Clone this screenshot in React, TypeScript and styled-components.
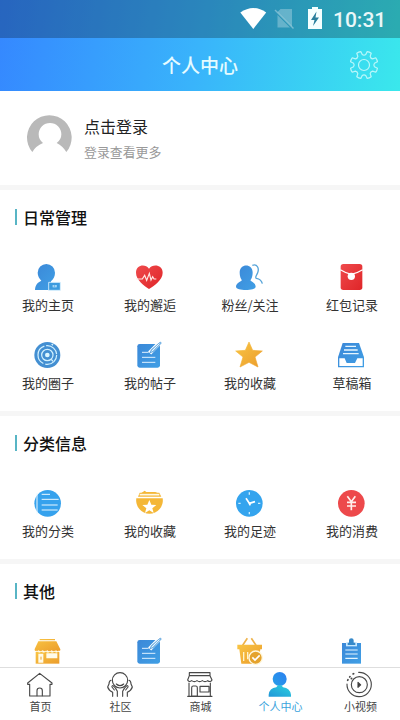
import React from 'react';
import styled, { createGlobalStyle } from 'styled-components';

const GlobalStyle = createGlobalStyle`
  * { box-sizing: border-box; }
  body { margin: 0; background: #fff; overflow: hidden; }
`;

const Screen = styled.div`
  width: 400px;
  height: 720px;
  display: flex;
  flex-direction: column;
  overflow: hidden;
  background: #fff;
  font-family: 'Noto Sans CJK SC', 'Noto Sans', sans-serif;
  color: #333;
`;

const Top = styled.header`
  flex: none;
  height: 91px;
  background: linear-gradient(100deg, #3587ff 0%, #39b4fb 50%, #3ae8ec 100%);
`;

const StatusBar = styled.div`
  height: 38px;
  padding-right: 13px;
  background: rgba(0, 0, 0, 0.25);
  display: flex;
  align-items: center;
  justify-content: flex-end;
`;

const StatusIcons = styled.svg`
  width: 88px;
  height: 38px;
  display: block;
`;

const Clock = styled.time`
  width: 54px;
  margin-left: 6px;
  font: 500 21px/38px Roboto, sans-serif;
  color: #e9f7f8;
  white-space: nowrap;
  padding-top: 1px;
`;

const TitleBar = styled.div`
  height: 53px;
  display: grid;
  grid-template-columns: 72px 1fr 72px;
  align-items: center;
  justify-items: center;
`;

const PageTitle = styled.h1`
  grid-column: 2;
  margin: 0;
  font-size: 19px;
  line-height: 28px;
  font-weight: 500;
  color: #e6fbff;
`;

const GearIcon = styled.svg`
  width: 30px;
  height: 30px;
`;

const Content = styled.main`
  flex: 1;
  min-height: 0;
  overflow: hidden;
`;

const Profile = styled.section`
  height: 94px;
  padding: 24px 0 0 26px;
  display: flex;
  gap: 12px;
`;

const Avatar = styled.svg`
  width: 46px;
  height: 46px;
`;

const LoginText = styled.div`
  margin-top: -1px;
`;

const LoginTitle = styled.div`
  font-size: 16px;
  line-height: 24px;
  color: #222;
`;

const LoginHint = styled.div`
  margin-top: 4px;
  font-size: 12.9px;
  line-height: 20px;
  color: #999;
`;

const Section = styled.section<{ $height: number }>`
  height: ${(p) => p.$height}px;
  border-top: 5px solid #f6f6f6;
  padding-top: 15px;
`;

const SectionTitle = styled.h2`
  margin: 0 0 0 15px;
  height: 24px;
  display: flex;
  align-items: center;
  gap: 6px;
  font-size: 16px;
  line-height: 22px;
  font-weight: 500;
  color: #111;
  padding-bottom: 1px;

  &::before {
    content: '';
    width: 2px;
    height: 16px;
    background: #58b5c5;
  }
`;

const MenuGrid = styled.div`
  margin: 34px 0 0 -4px;
  display: grid;
  grid-template-columns: 102px 102px 98px 106px;
  grid-auto-rows: 78px;
`;

const MenuItem = styled.div`
  display: flex;
  flex-direction: column;
  align-items: center;
`;

const MenuIcon = styled.svg`
  flex: none;
  width: 28px;
  height: 28px;
  overflow: visible;
`;

const MenuLabel = styled.span`
  margin-top: 4px;
  padding-left: 2px;
  font-size: 13px;
  line-height: 20px;
  white-space: nowrap;
`;

const TabBar = styled.nav`
  flex: none;
  height: 53px;
  border-top: 1px solid #dedede;
  background: #fff;
  display: grid;
  grid-template-columns: repeat(5, 1fr);
`;

const Tab = styled.div<{ $active?: boolean }>`
  display: flex;
  flex-direction: column;
  align-items: center;
  padding-top: 3px;
  font-size: 11px;
  line-height: 16px;
  color: ${(p) => (p.$active ? '#3aa3dc' : '#444')};
`;

const TabIcon = styled.svg`
  width: 28px;
  height: 28px;
  fill: none;
  stroke: #484848;
  stroke-width: 3.4;
  stroke-linecap: round;
  stroke-linejoin: round;
`;

const TabLabel = styled.span`
  margin-top: -1px;
  padding-left: 1px;
`;

const Gradients = styled.svg`
  display: block;
  width: 0;
  height: 0;
`;

const note = (
  <>
    <rect x="7" y="9" width="68" height="71" rx="7" fill="url(#blue)" />
    <path d="M21 34H41M21 49H61M21 64H61" stroke="#dff1ff" strokeWidth="3" />
    <path d="M44 36L76 3" stroke="#fff" strokeWidth="13" />
    <path d="M45 35L49 26L76 3L79 6L55 32Z" fill="#8cc4ee" stroke="#4a96d4" strokeWidth="2" />
    <path d="M50 31L73 8" stroke="#fff" strokeWidth="2.5" />
  </>
);

const STAR = 'M42 3L53 28L82 30L60 48L69 78L42 64L15 78L24 48L2 30L31 28Z';

const icons: Record<string, React.ReactNode> = {
  home: (
    <>
      <path d="M6 80C7 65 14 58 25 53C19 46 14 39 14 29A26 26 0 0 1 66 29C66 40 62 48 54 55V81H6Z" fill="url(#blue)" />
      <path d="M47 58H82V82H47Z" fill="#3c9bdf" stroke="#dff3ff" strokeWidth="2.5" />
      <path d="M59 66H71V73H59Z" fill="#b8e4ff" />
      <path d="M62 69H67" stroke="#368ccc" strokeWidth="3" />
    </>
  ),
  heart: (
    <>
      <path d="M42 78C28 68 3 51 3 29C3 5 31 1 42 17C53 1 83 5 83 29C83 51 57 68 42 78Z" fill="url(#red)" />
      <path d="M3 48H22L29 37L35 52L43 31L48 51L53 41L57 48H64" fill="none" stroke="#ffe9e5" strokeWidth="3.5" />
    </>
  ),
  fans: (
    <>
      <path d="M14 29C14 0 53 0 53 29C53 39 50 47 46 52C50 57 62 60 62 71C62 84 3 84 3 71C3 61 16 57 21 52C17 47 14 39 14 29Z" fill="url(#blue)" />
      <path d="M52 7C67 1 73 17 68 29C64 39 59 43 64 46C75 48 80 53 82 62" fill="none" stroke="#57a4d9" strokeWidth="4" />
    </>
  ),
  redpacket: (
    <>
      <rect x="11" y="3" width="65" height="78" rx="8" fill="url(#red)" />
      <path d="M10 20Q28 31 43 34Q59 31 77 20" fill="none" stroke="#fff" strokeWidth="3.5" />
      <circle cx="43" cy="40" r="11" fill="#fff" />
    </>
  ),
  rings: (
    <>
      <circle cx="43" cy="42" r="39" fill="#438fd2" />
      <g fill="none" stroke="#d2f1ff" strokeWidth="3.6">
        <circle cx="43" cy="42" r="28" strokeDasharray="50 6 66 5 45 4" />
        <circle cx="43" cy="42" r="17" />
        <path d="M55 55L60 61M56 9L60 13" strokeWidth="4" />
      </g>
      <circle cx="43" cy="42" r="7" fill="#daf5ff" />
    </>
  ),
  note,
  star: <path d={STAR} fill="url(#gold)" stroke="url(#gold)" strokeWidth="2" strokeLinejoin="round" />,
  drafts: (
    <>
      <path d="M17 6H66L81 49V79H3V49Z" fill="url(#blue)" />
      <path d="M25 16H57M21 27H62M18 38H65" stroke="#e6f6ff" strokeWidth="4" />
      <path d="M7 52H23L29 66H54L61 52H77V75H7Z" fill="#fff" />
    </>
  ),
  list: (
    <>
      <circle cx="44" cy="43" r="40" fill="#36a2ed" />
      <path d="M12 12V76M26 16H51M26 31H77M26 48H74M26 63H74" fill="none" stroke="#eaf8ff" strokeWidth="3" />
    </>
  ),
  favorite: (
    <>
      <path d="M18 13L29 5L34 9H61L69 13Z" fill="#f4b737" />
      <path d="M4 28H83A40 40 0 1 1 4 28Z" fill="#f4b737" />
      <path d="M9 23L14 11H73L79 23Z" fill="#f4b737" />
      <path d="M14 17H73" stroke="#fff8e4" strokeWidth="5" />
      <path d="M43 33L49 47L64 48L52 58L56 72L43 64L30 72L34 58L22 48L37 47Z" fill="#fff" />
    </>
  ),
  clock: (
    <>
      <circle cx="43" cy="43" r="40" fill="#34a4ee" />
      <path d="M43 10V17M43 69V76M10 43H17M69 43H76" stroke="#cceeff" strokeWidth="4" />
      <path d="M33 28L43 43L60 38M41 40L46 49" fill="none" stroke="#fff" strokeWidth="5" strokeLinejoin="round" />
    </>
  ),
  money: (
    <>
      <circle cx="43" cy="43" r="40" fill="#ed494b" />
      <path d="M31 22L43 38L55 22M43 38V64M30 40H57M30 51H57" fill="none" stroke="#fff0ed" strokeWidth="5" />
    </>
  ),
  store: (
    <>
      <path d="M20 6H66V10H20ZM16 13H70L82 37V40Q75 46 69 40Q63 46 56 40Q49 46 43 40Q36 46 29 40Q23 46 17 40Q10 46 5 40V36Z" fill="url(#gold)" />
      <path d="M8 45H79V80H8Z" fill="url(#gold)" />
      <path d="M11 42Q20 49 25 43Q33 49 38 43Q45 49 51 43Q58 49 64 43Q71 49 77 42" fill="none" stroke="#fff3c8" strokeWidth="3" />
      <path d="M16 50H31V77H16ZM40 49H73V64H40Z" fill="#fffbe9" />
      <path d="M24 59V68" stroke="#eda52c" strokeWidth="3" />
    </>
  ),
  basket: (
    <>
      <path d="M23 25L37 4M63 25L49 4" stroke="#eeb34b" strokeWidth="5" />
      <path d="M7 23H81V37H76L70 80H19L13 37H7Z" fill="url(#gold)" />
      <path d="M26 45V72M38 45V67" stroke="#fff3cb" strokeWidth="4" />
      <circle cx="62" cy="62" r="20" fill="#e5a32d" stroke="#fff8df" strokeWidth="4" />
      <path d="M52 61L60 69L74 55" fill="none" stroke="#fff" strokeWidth="5" />
    </>
  ),
  clipboard: (
    <>
      <path d="M15 18H72V80H15Z" fill="url(#blue)" />
      <path d="M27 16H60V28H27Z" fill="#c8e9ff" />
      <path d="M32 17H36V10Q36 4 43 4Q50 4 50 10V17H55V24H32Z" fill="#3689c9" />
      <path d="M25 39H62M25 51H62M25 64H62" stroke="#e4f6ff" strokeWidth="3.5" />
    </>
  ),
};

const sections = [
  {
    title: '日常管理',
    height: 226,
    items: [
      ['home', '我的主页'],
      ['heart', '我的邂逅'],
      ['fans', '粉丝/关注'],
      ['redpacket', '红包记录'],
      ['rings', '我的圈子'],
      ['note', '我的帖子'],
      ['star', '我的收藏'],
      ['drafts', '草稿箱'],
    ],
  },
  {
    title: '分类信息',
    height: 148,
    items: [
      ['list', '我的分类'],
      ['favorite', '我的收藏'],
      ['clock', '我的足迹'],
      ['money', '我的消费'],
    ],
  },
  {
    title: '其他',
    height: 148,
    items: [
      ['store', ''],
      ['note', ''],
      ['basket', ''],
      ['clipboard', ''],
    ],
  },
];

const tabs: { label: string; active?: boolean; icon: React.ReactNode }[] = [
  {
    label: '首页',
    icon: (
      <>
        <path d="M5 36L41 7L78 36V40H72V75H11V40H5Z" />
        <path d="M33 74V59Q33 51 41 51Q49 51 49 59V74" />
      </>
    ),
  },
  {
    label: '社区',
    icon: (
      <>
        <circle cx="42" cy="28" r="23" />
        <path d="M31 39Q42 49 53 39" />
        <path d="M15 28Q9 30 9 39L5 48Q8 58 20 64V76M34 76V61Q29 50 21 44Q17 44 18 48L25 57M69 28Q75 30 75 39L79 48Q76 58 64 64V76M50 76V61Q55 50 63 44Q67 44 66 48L59 57" />
      </>
    ),
  },
  {
    label: '商城',
    icon: (
      <>
        <path d="M10 5H72V14H10ZM10 14L5 27Q9 35 17 29Q25 35 33 29Q41 35 49 29Q57 35 65 29Q74 35 78 27L72 14" />
        <path d="M9 36V76M73 36V76M5 76H78M17 75V50Q17 45 22 45H29Q34 45 34 50V75ZM42 46H69V63H42Z" />
      </>
    ),
  },
  {
    label: '个人中心',
    active: true,
    icon: (
      <>
        <circle cx="41" cy="24" r="21" fill="url(#userHead)" stroke="none" />
        <path d="M8 77V71Q10 52 31 49L36 43H46L51 49Q72 52 75 71V77Z" fill="url(#userBody)" stroke="none" />
      </>
    ),
  },
  {
    label: '小视频',
    icon: (
      <>
        <circle cx="40" cy="41" r="24" />
        <path d="M38 4A36.500 36.500 0 1 1 3 39" />
        <path d="M5 28L6 26M11 18L12 17M21 9L23 8M16 23L17 22" strokeWidth="5" />
        <path d="M36 34V49L44 41.500Z" fill="#333" />
      </>
    ),
  },
];

const gearPath = Array.from({ length: 8 }, (_, i) => {
  const point = (radius: number, degrees: number) => {
    const angle = ((i * 45 + degrees - 67.5) * Math.PI) / 180;
    return `${(15 + radius * Math.cos(angle)).toFixed(2)} ${(15 + radius * Math.sin(angle)).toFixed(2)}`;
  };
  return `${i ? 'L' : 'M'}${point(10.6, -13)}L${point(13.8, -9)}Q${point(14.2, 0)} ${point(13.8, 9)}L${point(10.6, 13)}Q${point(9.2, 22.5)} ${point(10.6, 32)}`;
}).join('') + 'Z';

export default function App() {
  return (
    <Screen>
      <GlobalStyle />
      <Gradients>
        <defs>
          <linearGradient id="blue" x1="0" y1="0" x2="1" y2="1">
            <stop stopColor="#3b88d8" />
            <stop offset="1" stopColor="#409fe5" />
          </linearGradient>
          <linearGradient id="red" x1="0" y1="0" x2="1" y2="1">
            <stop stopColor="#ef4a4c" />
            <stop offset="1" stopColor="#df2528" />
          </linearGradient>
          <linearGradient id="gold" x1="0" y1="0" x2="1" y2="1">
            <stop stopColor="#f9c544" />
            <stop offset="1" stopColor="#eb9c2b" />
          </linearGradient>
          <linearGradient id="userHead" x1="0" y1="1" x2="1" y2="0">
            <stop stopColor="#269fe8" />
            <stop offset="1" stopColor="#2c7ff0" />
          </linearGradient>
          <linearGradient id="userBody" x1="0" y1="1" x2="1" y2="0">
            <stop stopColor="#2196d8" />
            <stop offset="1" stopColor="#2bd1df" />
          </linearGradient>
        </defs>
      </Gradients>
      <Top>
        <StatusBar>
          <StatusIcons viewBox="0 0 88 38">
            <path d="M1.3 12.5Q14.3 3.5 27.2 12.5L14.3 29Z" fill="#fff" />
            <path d="M41.5 9H53V26.5L38.5 12ZM38.5 15L51 27.5H38.5Z" fill="#fff" opacity=".28" />
            <path d="M36 10L54.5 28.5" stroke="#fff" strokeWidth="1.5" opacity=".35" />
            <path d="M69 9H73V7H79V9H83V29H69Z" fill="#f5ffff" />
            <path d="M77.5 11.5L72 20H75.5L74 26L80 17.5H76.5Z" fill="#297f9d" />
          </StatusIcons>
          <Clock>10:31</Clock>
        </StatusBar>
        <TitleBar>
          <PageTitle>个人中心</PageTitle>
          <GearIcon viewBox="0 0 30 30" fill="none" stroke="#baf7fa" strokeWidth="1.2" strokeLinejoin="round">
            <path d={gearPath} />
            <circle cx="15" cy="15" r="5.5" />
          </GearIcon>
        </TitleBar>
      </Top>
      <Content>
        <Profile>
          <Avatar viewBox="0 0 138 138">
            <path
              d="M19 111A67 67 0 1 1 121 111Q111 94 92 84Q106 74 106 58A34 34 0 0 0 38 58Q38 74 51 84Q29 93 19 111Z"
              fill="#b9b9b9"
            />
          </Avatar>
          <LoginText>
            <LoginTitle>点击登录</LoginTitle>
            <LoginHint>登录查看更多</LoginHint>
          </LoginText>
        </Profile>
        {sections.map((section) => (
          <Section key={section.title} $height={section.height}>
            <SectionTitle>{section.title}</SectionTitle>
            <MenuGrid>
              {section.items.map(([icon, label]) => (
                <MenuItem key={icon}>
                  <MenuIcon viewBox="0 0 84 84">{icons[icon]}</MenuIcon>
                  {label && <MenuLabel>{label}</MenuLabel>}
                </MenuItem>
              ))}
            </MenuGrid>
          </Section>
        ))}
      </Content>
      <TabBar>
        {tabs.map((tab) => (
          <Tab key={tab.label} $active={tab.active}>
            <TabIcon viewBox="0 0 84 84">{tab.icon}</TabIcon>
            <TabLabel>{tab.label}</TabLabel>
          </Tab>
        ))}
      </TabBar>
    </Screen>
  );
}
